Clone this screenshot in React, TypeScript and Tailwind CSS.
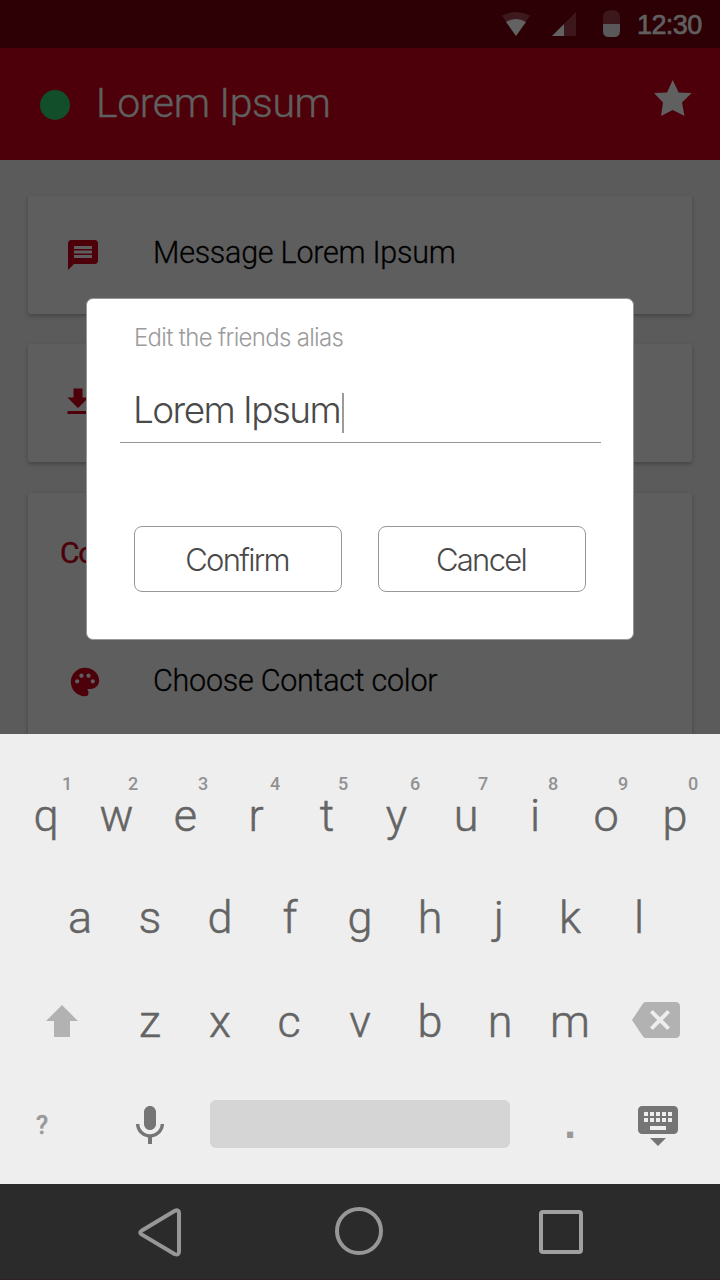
import { MdBackspace, MdKeyboardHide, MdMessage, MdPalette } from "react-icons/md";

type Key = { label: string; dx?: number; alt?: string; altX?: number };

const topRow: Key[] = [
  { label: "q", alt: "1", altX: 67 },
  { label: "w", dx: 0.5, alt: "2", altX: 133 },
  { label: "e", dx: -0.5, alt: "3", altX: 203 },
  { label: "r", alt: "4", altX: 275 },
  { label: "t", dx: 1, alt: "5", altX: 343 },
  { label: "y", dx: 0.5, alt: "6", altX: 415 },
  { label: "u", alt: "7", altX: 483 },
  { label: "i", dx: -1, alt: "8", altX: 553 },
  { label: "o", alt: "9", altX: 623 },
  { label: "p", dx: -1, alt: "0", altX: 693 },
];
const homeRow: Key[] = "asdfghjkl".split("").map((label) => ({ label, dx: label === "l" || label === "j" ? -1 : 0 }));
const bottomRow: Key[] = "zxcvbnm".split("").map((label) => ({ label, dx: label === "c" ? -1 : 0 }));

function KeyCap({ k, index }: { k: Key; index: number }) {
  return (
    <div className="relative flex w-[70px] shrink-0 items-center justify-center">
      <span style={k.dx ? { marginLeft: k.dx * 2 } : undefined}>{k.label}</span>
      {k.alt && (
        <span
          className="absolute top-[8px] w-5 text-center text-[18px] leading-[22px] font-medium text-[#929292] [-webkit-text-stroke:0]"
          style={{ left: (k.altX ?? 0) - 21 - index * 70 }}
        >
          {k.alt}
        </span>
      )}
    </div>
  );
}

function StatusBar() {
  return (
    <div className="flex h-12 items-center bg-[#2c0005]">
      <svg className="ml-[502px] h-12 w-[28px] shrink-0" viewBox="0 0 28 48">
        <path d="M14 36 L0 15.6 Q14 8.6 28 15.6 Z" fill="#3e1a1f" />
        <path d="M14 36 L4 22 Q14 16 24 22 Z" fill="#626262" />
      </svg>
      <svg className="ml-[22px] h-12 w-6 shrink-0" viewBox="0 0 24 48">
        <path d="M0 36H24V12Z" fill="#3c181d" />
        <path d="M0 36H12V24Z" fill="#626262" />
      </svg>
      <svg className="ml-[27px] h-12 w-[17px] shrink-0" viewBox="0 0 17 48">
        <path d="M0 24V17Q0 10 8.500 10Q17 10 17 17V24Z" fill="#3c181d" />
        <path d="M0 24H17V31Q17 37 11 37H6Q0 37 0 31Z" fill="#595959" />
      </svg>
      <span className="mt-0.5 ml-[17px] whitespace-nowrap font-['Liberation_Sans',sans-serif] text-[27px] tracking-[-0.6px] text-[#606060] [-webkit-text-stroke:0.7px_#606060]">
        12:30
      </span>
    </div>
  );
}

function Header() {
  return (
    <header className="flex h-28 items-center bg-[#4d0009]">
      <div className="ml-10 mt-0.5 size-[30px] rounded-full bg-[#114e29]" />
      <h1 className="ml-[26px] whitespace-nowrap text-[41px] font-light tracking-[-0.4px] text-[#606060] [-webkit-text-stroke:0.4px_#606060]">
        Lorem Ipsum
      </h1>
      <svg className="mr-[28px] mb-3 ml-auto h-9 w-[38px]" viewBox="0 0 38 36">
        <path
          d="M18.700 0L24.700 12.600L37.700 13L28 22.500L30.500 36L18.700 30L7 36L9 22.500L0 13L13 12.600Z"
          fill="#606060"
        />
      </svg>
    </header>
  );
}

const cardClass = "mx-7 shrink-0 rounded-[2px] bg-[#5e5e5e] shadow-[0_2px_4px_rgba(0,0,0,0.25)]";

function Contact() {
  return (
    <main className="flex h-[574px] flex-col overflow-hidden bg-[#5b5b5b] pt-9 text-[30.5px] font-light tracking-[-0.25px] text-black">
      <section className={`${cardClass} flex h-[118px] items-center pl-[37px]`}>
        <MdMessage className="size-9 text-[#4d0009]" />
        <span className="ml-[52px] pb-1 [-webkit-text-stroke:0.3px_#000]">Message Lorem Ipsum</span>
      </section>
      <section className={`${cardClass} mt-[30px] flex h-[118px] items-center pl-8`}>
        <svg className="mb-0.5 size-9" viewBox="0 0 24 24" fill="#4d0009">
          <path d="M19 9h-4V3H9v6H5l7 7 7-7zM5 18v2h14v-2H5z" />
        </svg>
      </section>
      <section className={`${cardClass} mt-[31px] flex h-[300px] flex-col`}>
        <h2 className="mt-9 ml-8 text-[30px] leading-[48px] font-normal tracking-[-1.2px] text-[#4d0009] [-webkit-text-stroke:0.4px_#4d0009]">
          Contact
        </h2>
        <div className="mt-[82px] flex h-12 items-center pl-10">
          <MdPalette className="mb-0.5 size-[34px] text-[#4d0009]" />
          <span className="ml-[51px] pb-1 [-webkit-text-stroke:0.3px_#000]">Choose Contact color</span>
        </div>
      </section>
    </main>
  );
}

function AliasDialog() {
  const button =
    "flex h-[66px] w-[208px] items-center justify-center rounded-[8px] border border-[#979797] pt-0.5 pr-0.5 text-[31px] tracking-[-1.7px]";
  return (
    <div
      role="dialog"
      className="absolute top-[298px] left-[86px] flex h-[342px] w-[548px] flex-col rounded-[7px] border border-[#979797] bg-white font-['Inter',sans-serif] font-light text-[#4a4a4a]"
    >
      <p className="mt-[23px] ml-[47px] text-[24px] leading-8 tracking-[-0.7px] text-[#9b9b9b]">
        Edit the friends alias
      </p>
      <div className="mt-8 mr-8 ml-[33px] flex h-[57px] items-start border-b border-[#979797] pt-[7px] pl-[13px]">
        <span className="-mt-[3px] w-[209px] whitespace-nowrap text-[37px] leading-[40px] tracking-[-1.6px]">
          Lorem Ipsum
        </span>
        <span className="h-10 w-0.5 bg-[#9b9b9b]" />
      </div>
      <div className="mt-[83px] ml-[47px] flex gap-9">
        <button className={button}>Confirm</button>
        <button className={button}>Cancel</button>
      </div>
    </div>
  );
}

function Keyboard() {
  return (
    <div className="flex h-[450px] flex-col bg-[#eeeeee] pt-[31px] text-[45px] leading-[46px] font-light text-[#646464] [-webkit-text-stroke:0.5px_#646464]">
      <div className="flex h-[102px] pl-[11px]">
        {topRow.map((k, i) => (
          <KeyCap key={k.label} k={k} index={i} />
        ))}
      </div>
      <div className="flex h-[102px] pl-[45px]">
        {homeRow.map((k, i) => (
          <KeyCap key={k.label} k={k} index={i} />
        ))}
      </div>
      <div className="flex h-[106px] items-center">
        <svg className="mr-[37px] mb-0.5 ml-[46px] h-8 w-8" viewBox="0 0 32 32">
          <path d="M16 0L32 16H24V32H8V16H0Z" fill="#b2b2b2" />
        </svg>
        {bottomRow.map((k, i) => (
          <KeyCap key={k.label} k={k} index={i} />
        ))}
        <MdBackspace className="mb-1 ml-[27px] size-12 text-[#b2b2b2]" />
      </div>
      <div className="-mt-px flex h-[100px] items-center [-webkit-text-stroke:0]">
        <span className="mt-1 ml-9 w-3 text-[25px] font-medium text-[#999999] [-webkit-text-stroke:0.3px_#999999]">
          ?
        </span>
        <svg className="mt-1 ml-[78px] size-12" viewBox="0 0 24 24" fill="#757575">
          <path d="M12 14c1.660 0 3-1.340 3-3V5c0-1.660-1.340-3-3-3S9 3.340 9 5v6c0 1.660 1.340 3 3 3zm5.300-3c0 3-2.540 5.100-5.300 5.100S6.700 14 6.700 11H5c0 3.410 2.720 6.230 6 6.720V21h2v-3.280c3.280-.48 6-3.300 6-6.720h-1.700z" />
        </svg>
        <div className="ml-9 h-12 w-[300px] rounded-md bg-[#d5d5d5]" />
        <span className="ml-[50px] w-5 text-center font-['Liberation_Sans',sans-serif] text-[42px] font-bold text-[#999999]">
          .
        </span>
        <MdKeyboardHide className="ml-[54px] size-12 text-[#757575]" />
      </div>
    </div>
  );
}

function NavBar() {
  return (
    <nav className="flex h-24 items-start border-b border-[#2e2229] bg-[#2b2b2b]">
      <svg className="mt-6 ml-[138px] h-[49px] w-[43px]" viewBox="0 0 43 49" fill="none">
        <path
          d="M36.500 3L3.500 22.800Q1 24.500 3.500 26.400L36.500 46Q41 48 41 43.500V5Q41 1 36.500 3Z"
          stroke="#979797"
          strokeWidth="4"
          strokeLinejoin="round"
        />
      </svg>
      <div className="mt-[23px] ml-[154px] size-12 rounded-full border-4 border-[#979797]" />
      <div className="mt-[26px] ml-[156px] size-11 rounded-[4px] border-4 border-[#a0a0a0]" />
    </nav>
  );
}

export default function App() {
  return (
    <div className="relative h-[1280px] w-[720px] overflow-hidden font-['Roboto',sans-serif]">
      <StatusBar />
      <Header />
      <Contact />
      <Keyboard />
      <NavBar />
      <AliasDialog />
    </div>
  );
}
